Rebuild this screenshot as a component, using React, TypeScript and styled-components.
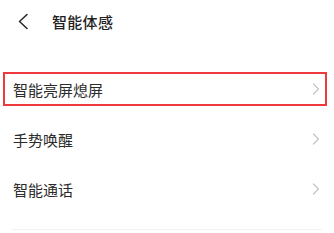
import React from "react";
import styled, { createGlobalStyle } from "styled-components";

const GlobalStyle = createGlobalStyle`
  html, body {
    margin: 0;
    padding: 0;
    background: #ffffff;
  }

  body {
    font-family: "Noto Sans CJK SC", "Noto Sans", sans-serif;
    -webkit-font-smoothing: antialiased;
  }
`;

const Page = styled.div`
  width: 334px;
  height: 233px;
  overflow: hidden;
  background: #ffffff;
`;

const Header = styled.div`
  display: flex;
  align-items: center;
  height: 43px;
  padding-left: 17px;
`;

const BackButton = styled.div`
  display: flex;
  align-items: center;
  width: 35px;

  svg {
    width: 12px;
    height: 17px;
  }
`;

const Title = styled.h1`
  margin: 0;
  font-size: 15px;
  font-weight: 500;
  letter-spacing: 0.3px;
  color: #1f1f1f;
`;

const List = styled.div`
  display: flex;
  flex-direction: column;
  margin-top: 21px;
`;

const Row = styled.div<{ $highlighted?: boolean }>`
  position: relative;
  display: flex;
  align-items: center;
  justify-content: space-between;
  height: 50px;
  padding: 0 14px 0 13px;

  &::after {
    content: "";
    display: ${({ $highlighted }) => ($highlighted ? "block" : "none")};
    position: absolute;
    top: 8px;
    bottom: 8px;
    left: 3px;
    right: 7px;
    border: 2.5px solid #ef3a3d;
  }
`;

const RowLabel = styled.span`
  font-size: 15px;
  color: #2b2b2b;
`;

const Chevron = styled.svg`
  width: 8px;
  height: 12px;
`;

const Divider = styled.hr`
  border: none;
  height: 1px;
  background: #f2f2f2;
  margin: 15px 12px 0 12px;
`;

const items = [
  { label: "智能亮屏熄屏", highlighted: true },
  { label: "手势唤醒" },
  { label: "智能通话" },
];

export default function App() {
  return (
    <Page>
      <GlobalStyle />
      <Header>
        <BackButton>
          <svg viewBox="0 0 12 17" fill="none">
            <path
              d="M10 1.5 L2.5 8.5 L10 15.5"
              stroke="#2a2a2a"
              strokeWidth="1.6"
              strokeLinecap="round"
              strokeLinejoin="round"
            />
          </svg>
        </BackButton>
        <Title>智能体感</Title>
      </Header>

      <List>
        {items.map((item) => (
          <Row key={item.label} $highlighted={item.highlighted}>
            <RowLabel>{item.label}</RowLabel>
            <Chevron viewBox="0 0 8 12" fill="none">
              <path
                d="M1.5 1 L6.5 6 L1.5 11"
                stroke="#c4c4c4"
                strokeWidth="1.2"
                strokeLinecap="round"
                strokeLinejoin="round"
              />
            </Chevron>
          </Row>
        ))}
      </List>

      <Divider />
    </Page>
  );
}
